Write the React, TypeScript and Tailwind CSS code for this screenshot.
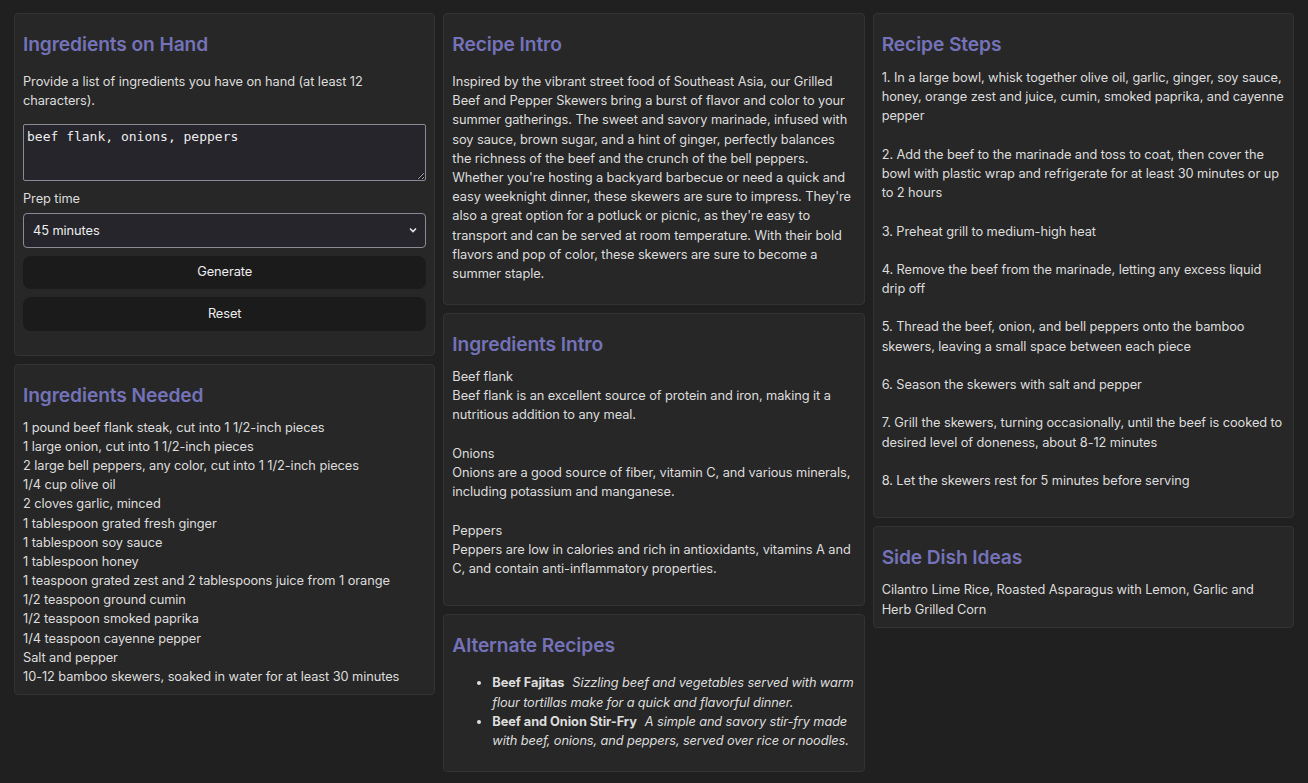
import React from "react";

const ingredientsNeeded = [
  "1 pound beef flank steak, cut into 1 1/2-inch pieces",
  "1 large onion, cut into 1 1/2-inch pieces",
  "2 large bell peppers, any color, cut into 1 1/2-inch pieces",
  "1/4 cup olive oil",
  "2 cloves garlic, minced",
  "1 tablespoon grated fresh ginger",
  "1 tablespoon soy sauce",
  "1 tablespoon honey",
  "1 teaspoon grated zest and 2 tablespoons juice from 1 orange",
  "1/2 teaspoon ground cumin",
  "1/2 teaspoon smoked paprika",
  "1/4 teaspoon cayenne pepper",
  "Salt and pepper",
  "10-12 bamboo skewers, soaked in water for at least 30 minutes",
];

const ingredientInfo = [
  {
    name: "Beef flank",
    text: "Beef flank is an excellent source of protein and iron, making it a nutritious addition to any meal.",
  },
  {
    name: "Onions",
    text: "Onions are a good source of fiber, vitamin C, and various minerals, including potassium and manganese.",
  },
  {
    name: "Peppers",
    text: "Peppers are low in calories and rich in antioxidants, vitamins A and C, and contain anti-inflammatory properties.",
  },
];

const steps = [
  "1. In a large bowl, whisk together olive oil, garlic, ginger, soy sauce, honey, orange zest and juice, cumin, smoked paprika, and cayenne pepper",
  "2. Add the beef to the marinade and toss to coat, then cover the bowl with plastic wrap and refrigerate for at least 30 minutes or up to 2 hours",
  "3. Preheat grill to medium-high heat",
  "4. Remove the beef from the marinade, letting any excess liquid drip off",
  "5. Thread the beef, onion, and bell peppers onto the bamboo skewers, leaving a small space between each piece",
  "6. Season the skewers with salt and pepper",
  "7. Grill the skewers, turning occasionally, until the beef is cooked to desired level of doneness, about 8-12 minutes",
  "8. Let the skewers rest for 5 minutes before serving",
];

const alternates = [
  {
    name: "Beef Fajitas",
    text: "Sizzling beef and vegetables served with warm flour tortillas make for a quick and flavorful dinner.",
  },
  {
    name: "Beef and Onion Stir-Fry",
    text: "A simple and savory stir-fry made with beef, onions, and peppers, served over rice or noodles.",
  },
];

const Heading = ({ children }: { children: React.ReactNode }) => (
  <h2 className="mt-2 mb-[9px] text-[19.2px] leading-7 font-semibold tracking-[-0.1px] text-[#7472b8]">
    {children}
  </h2>
);

const Card = ({ title, children }: { title: string; children: React.ReactNode }) => {
  return (
    <section className="rounded-[4px] border border-[#333333] bg-[#272727] p-2">
      <Heading>{title}</Heading>
      {children}
    </section>
  );
};

export default function App() {
  return (
    <div
      className="min-h-screen bg-[#202020] px-[14px] pt-[13px] pb-4 text-[12.8px] leading-[1.5] tracking-[-0.07px] text-[#dddddd]"
      style={{ fontFamily: "Inter, 'Noto Sans', sans-serif" }}
    >
      <div className="grid grid-cols-3 items-start gap-2">
        {/* Left column */}
        <div className="flex flex-col gap-2">
          <section className="rounded-[4px] border border-[#333333] bg-[#272727] px-2 pt-2 pb-6">
            <Heading>Ingredients on Hand</Heading>
            <p className="mt-[14px] mb-[14px]">
              Provide a list of ingredients you have on hand (at least 12 characters).
            </p>
            <textarea
              className="block h-[57px] w-full rounded-[2px] border border-[#8a8a96] bg-[#25252b] px-[3px] py-[2px] text-[13px] leading-[1.5] tracking-normal text-[#eeeeee] outline-none"
              style={{ fontFamily: "'DejaVu Sans Mono', monospace" }}
              defaultValue="beef flank, onions, peppers"
            />
            <label className="mt-2 block">Prep time</label>
            <div className="relative mt-1">
              <select
                className="block h-[35px] w-full appearance-none rounded-[4px] border border-[#8a8a96] bg-[#25252b] pl-[9px] pt-px text-[12.8px] text-[#eeeeee] outline-none"
                defaultValue="45"
              >
                <option value="15">15 minutes</option>
                <option value="30">30 minutes</option>
                <option value="45">45 minutes</option>
                <option value="60">60 minutes</option>
              </select>
              <svg
                className="pointer-events-none absolute top-1/2 right-[8px] -translate-y-1/2"
                width="10"
                height="10"
                viewBox="0 0 10 10"
                fill="none"
                stroke="#e5e5e5"
                strokeWidth="1.6"
              >
                <path d="M2 3.5 L5 6.5 L8 3.5" />
              </svg>
            </div>
            <button className="mt-2 block h-[33px] w-full rounded-lg bg-[#1b1b1b] font-normal text-[#eeeeee]">
              Generate
            </button>
            <button className="mt-2 block h-[34px] w-full rounded-lg bg-[#1b1b1b] font-normal text-[#eeeeee]">
              Reset
            </button>
          </section>

          <Card title="Ingredients Needed">
            <div>
              {ingredientsNeeded.map((item) => (
                <div key={item}>{item}</div>
              ))}
            </div>
          </Card>
        </div>

        {/* Middle column */}
        <div className="flex flex-col gap-2">
          <Card title="Recipe Intro">
            <p className="mt-[14px] mb-[13px]">
              Inspired by the vibrant street food of Southeast Asia, our Grilled Beef and Pepper Skewers
              bring a burst of flavor and color to your summer gatherings. The sweet and savory marinade,
              infused with soy sauce, brown sugar, and a hint of ginger, perfectly balances the richness of
              the beef and the crunch of the bell peppers. Whether you're hosting a backyard barbecue or need
              a quick and easy weeknight dinner, these skewers are sure to impress. They're also a great
              option for a potluck or picnic, as they're easy to transport and can be served at room
              temperature. With their bold flavors and pop of color, these skewers are sure to become a
              summer staple.
            </p>
          </Card>

          <Card title="Ingredients Intro">
            {ingredientInfo.map((info) => (
              <div key={info.name} className="mb-[19.2px]">
                <div>{info.name}</div>
                <div>{info.text}</div>
              </div>
            ))}
          </Card>

          <Card title="Alternate Recipes">
            <ul className="mt-[14px] mb-[13px] list-disc pl-10">
              {alternates.map((alt) => (
                <li key={alt.name}>
                  <strong className="font-bold">{alt.name}</strong>
                  <em className="ml-2 tracking-[-0.12px]">{alt.text}</em>
                </li>
              ))}
            </ul>
          </Card>
        </div>

        {/* Right column */}
        <div className="flex flex-col gap-2">
          <Card title="Recipe Steps">
            <div className="pt-px">
              {steps.map((step) => (
                <div key={step} className="mb-[19.2px]">
                  {step}
                </div>
              ))}
            </div>
          </Card>

          <Card title="Side Dish Ideas">
            <div>Cilantro Lime Rice, Roasted Asparagus with Lemon, Garlic and Herb Grilled Corn</div>
          </Card>
        </div>
      </div>
    </div>
  );
}
